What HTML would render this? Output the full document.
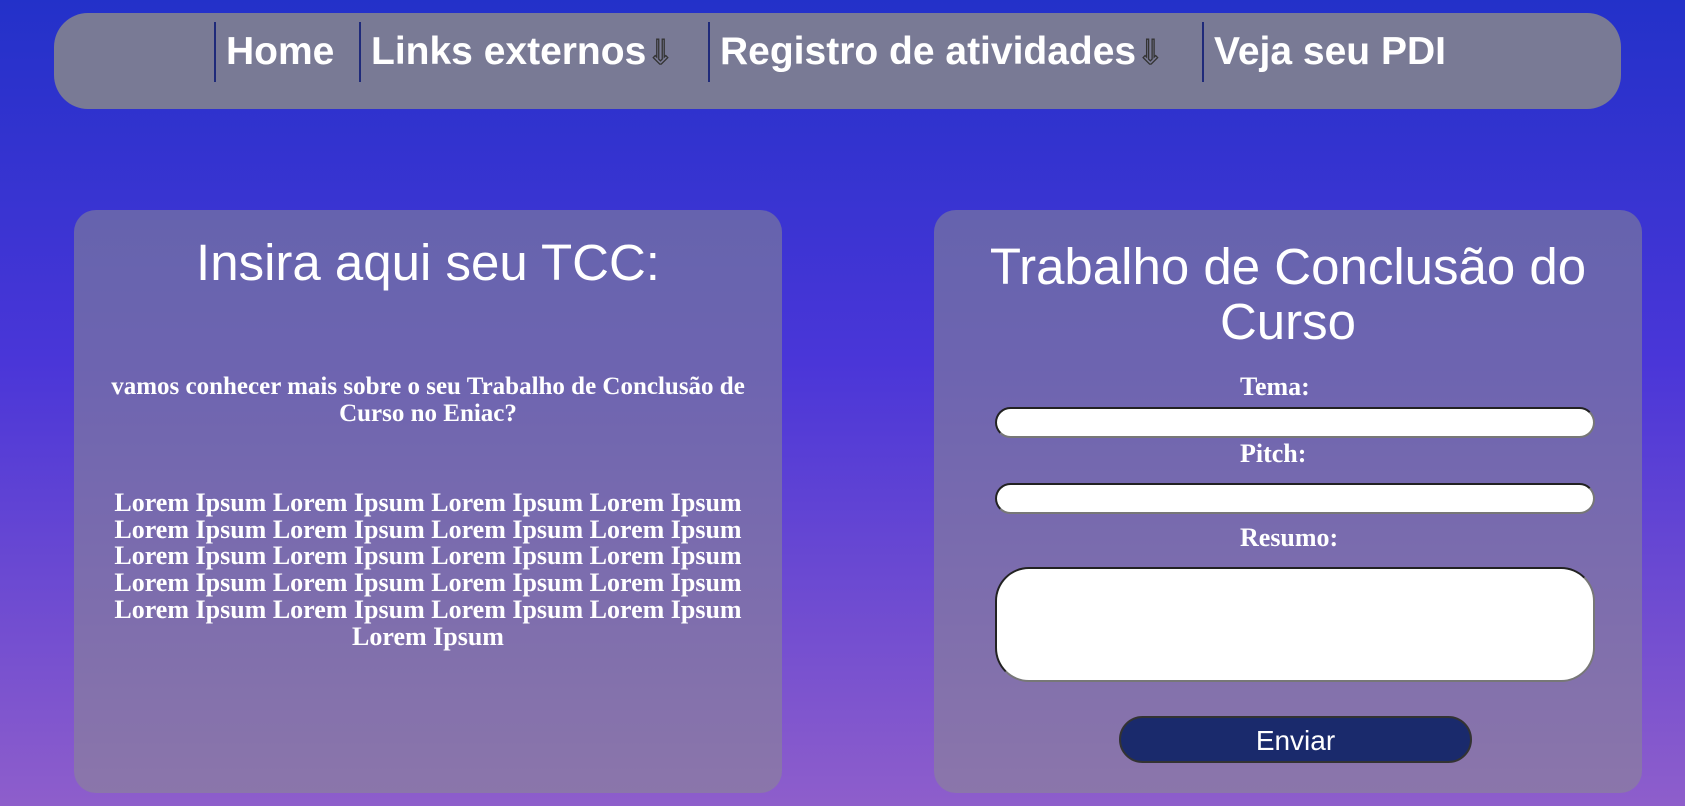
<!DOCTYPE html>
<html><head><meta charset="utf-8"><style>
*{margin:0;padding:0;box-sizing:border-box}
html,body{width:1685px;height:806px;overflow:hidden}
body{background:linear-gradient(#2331c9 0%,#4a36d8 45%,#8e5ecb 100%);font-family:"Liberation Sans",sans-serif;position:relative}
.nav{position:absolute;left:54px;top:13px;width:1567px;height:96px;background:#797a95;border-radius:34px}
.sep{position:absolute;top:9px;height:60px;width:2px;background:#1f2a7a}
.nl{position:absolute;top:17px;color:#fff;font-weight:bold;font-size:39px;line-height:44px;white-space:nowrap}
.arr{color:transparent;-webkit-text-stroke:1.3px #333;font-weight:normal;font-family:"DejaVu Sans",sans-serif;font-size:34px}
.card{position:absolute;top:210px;width:708px;height:583px;background:rgba(139,139,143,0.55);border-radius:22px;color:#fff;text-align:center}
h1{font-weight:normal;font-size:51px;line-height:55px;position:absolute;left:30px;right:30px}
.s{font-family:"Liberation Serif",serif;font-weight:bold;position:absolute}
.lab{font-family:"Liberation Serif",serif;font-weight:bold;font-size:26px;position:absolute;line-height:28px}
.inp{position:absolute;left:61px;width:600px;background:#fff;border:2px solid #222;border-bottom-color:#777;border-right-color:#777}
.btn{position:absolute;left:185px;top:506px;width:353px;height:47px;background:#1a2a6c;border:2px solid #333;border-radius:24px;color:#fff;font-size:28px;line-height:45px}
</style></head><body>
<div class="nav">
<div class="sep" style="left:160px"></div>
<div class="sep" style="left:305px"></div>
<div class="sep" style="left:654px"></div>
<div class="sep" style="left:1148px"></div>
<div class="nl" style="left:172px">Home</div>
<div class="nl" style="left:317px">Links externos<span class="arr">⇓</span></div>
<div class="nl" style="left:666px">Registro de atividades<span class="arr">⇓</span></div>
<div class="nl" style="left:1160px">Veja seu PDI</div>
</div>
<div class="card" style="left:74px">
<h1 style="top:25px">Insira aqui seu TCC:</h1>
<div class="s" style="left:8px;right:8px;top:163px;font-size:25px;line-height:27px">vamos conhecer mais sobre o seu Trabalho de Conclusão de Curso no Eniac?</div>
<div class="s" style="left:28px;right:28px;top:280px;font-size:26px;line-height:26.7px">Lorem Ipsum Lorem Ipsum Lorem Ipsum Lorem Ipsum Lorem Ipsum Lorem Ipsum Lorem Ipsum Lorem Ipsum Lorem Ipsum Lorem Ipsum Lorem Ipsum Lorem Ipsum Lorem Ipsum Lorem Ipsum Lorem Ipsum Lorem Ipsum Lorem Ipsum Lorem Ipsum Lorem Ipsum Lorem Ipsum Lorem Ipsum</div>
</div>
<div class="card" style="left:934px">
<h1 style="top:29px">Trabalho de Conclusão do Curso</h1>
<div class="lab" style="left:306px;top:163px">Tema:</div>
<div class="inp" style="top:197px;height:31px;border-radius:16px"></div>
<div class="lab" style="left:306px;top:230px">Pitch:</div>
<div class="inp" style="top:273px;height:31px;border-radius:16px"></div>
<div class="lab" style="left:306px;top:314px">Resumo:</div>
<div class="inp" style="top:357px;height:115px;border-radius:34px"></div>
<div class="btn">Enviar</div>
</div>
</body></html>
